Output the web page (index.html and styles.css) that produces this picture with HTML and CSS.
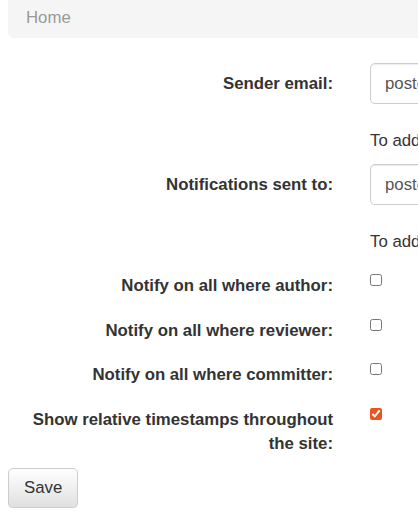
FILE: index.html
```html
<!DOCTYPE html>
<html lang="en">
<head>
<meta charset="utf-8">
<title>Settings</title>
<link rel="stylesheet" href="styles.css">
</head>
<body>
<div class="page">
  <ol class="breadcrumb"><li>Home</li></ol>
  <form class="settings">
    <div class="row row-first">
      <label class="label" for="sender">Sender email:</label>
      <div class="control">
        <input class="field" id="sender" type="text" value="poster@example.com">
        <p class="help">To add more senders, separate each address with a comma.</p>
      </div>
    </div>
    <div class="row row-second">
      <label class="label" for="recipients">Notifications sent to:</label>
      <div class="control">
        <input class="field" id="recipients" type="text" value="poster@example.com">
        <p class="help">To add more recipients, separate each address with a comma.</p>
      </div>
    </div>
    <div class="row row-check">
      <label class="label" for="author">Notify on all where author:</label>
      <div class="control"><input class="check" id="author" type="checkbox"></div>
    </div>
    <div class="row row-check">
      <label class="label" for="reviewer">Notify on all where reviewer:</label>
      <div class="control"><input class="check" id="reviewer" type="checkbox"></div>
    </div>
    <div class="row row-check">
      <label class="label" for="committer">Notify on all where committer:</label>
      <div class="control"><input class="check" id="committer" type="checkbox"></div>
    </div>
    <div class="row row-check">
      <label class="label" for="relative">Show relative timestamps throughout the site:</label>
      <div class="control"><input class="check" id="relative" type="checkbox" checked></div>
    </div>
    <button class="btn" type="button">Save</button>
  </form>
</div>
</body>
</html>
```
FILE: styles.css
```css
html, body {
  margin: 0;
  padding: 0;
  overflow: hidden;
  background: #fff;
}
body {
  font-family: "Liberation Sans", Arial, Helvetica, sans-serif;
  font-size: 16.8px;
  line-height: 24px;
  color: #333;
}
.page {
  padding: 0 0 0 8px;
  width: 800px;
}
.breadcrumb {
  list-style: none;
  margin: 0;
  padding: 6px 18px 8px;
  background: #f5f5f5;
  border-radius: 0 0 5px 5px;
  color: #999;
}
.settings {
  margin: 25px 0 0;
}
.row {
  display: grid;
  grid-template-columns: 325px 420px;
  column-gap: 37px;
  align-items: start;
}
.row-second {
  margin-top: 11px;
}
.row-check {
  margin-top: 20.5px;
}
.row-second + .row-check {
  margin-top: 20px;
}
.label {
  font-weight: 700;
  text-align: right;
  padding-left: 18px;
}
.row-first .label,
.row-second .label {
  padding-top: 9px;
}
.control {
  min-width: 0;
}
.field {
  display: block;
  box-sizing: border-box;
  width: 100%;
  height: 41px;
  margin: 0;
  padding: 7px 14px;
  font-family: inherit;
  font-size: 16.8px;
  line-height: 24px;
  color: #555;
  background: #fff;
  border: 1px solid #ccc;
  border-radius: 5px;
  box-shadow: inset 0 1px 1px rgba(0,0,0,.075);
  outline: none;
}
.help {
  margin: 25px 0 0;
  color: #333;
  white-space: nowrap;
}
.check {
  display: block;
  width: 12px;
  height: 12px;
  margin: 0;
  accent-color: #e95420;
}
.btn {
  display: block;
  margin-top: 12px;
  padding: 7px 15px;
  font-family: inherit;
  font-size: 16.8px;
  line-height: 24px;
  color: #333;
  background: linear-gradient(to bottom, #fff 0%, #e0e0e0 100%);
  border: 1px solid #ccc;
  border-radius: 5px;
  box-shadow: inset 0 1px 0 rgba(255,255,255,.15), 0 1px 1px rgba(0,0,0,.075);
}
```
